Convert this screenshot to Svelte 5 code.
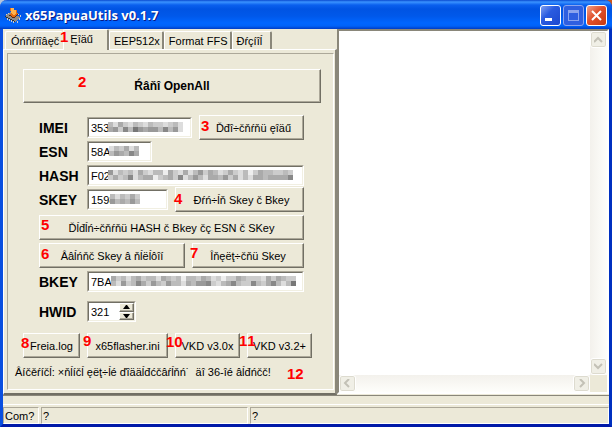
<script>
	let tabs = ['Óńňŕíîâęč', 'Ęîäű', 'EEP512x', 'Format FFS', 'Đŕçíîĺ']
	let active = 'Ęîäű'

	let imei = '353'
	let esn = '58A'
	let hash = 'F02'
	let skey = '1598'
	let bkey = '7BA'
	let hwid = 321
	let log = ''

	// two rows of grey cells per hidden value, 0 = dark, f = white
	const masks = {
		imei: ['bdacdbcdbccdcbd', 'a9c8b79a99b8b9d'],
		esn: ['dbcadb', 'b9ab8a'],
		hash: ['9dbcbdacdbbeacdadb9cabdcacdbecabbccbc', 'cacb8dbaaecbac8db9bdaab9cadbdaabaaaa8'],
		skey: ['bdbcac', '9bab9b'],
		bkey: ['acbdbacbbdabcbebbcabdceccabcccdacabcc', 'bd9cb8ac9bc9bbdab998cdba8bcc8bca8bdb7']
	}

	const notes = [
		{ n: 1, x: 60, y: 28 }, { n: 2, x: 78, y: 73 }, { n: 3, x: 201, y: 117 },
		{ n: 4, x: 174, y: 190 }, { n: 5, x: 41, y: 216 }, { n: 6, x: 41, y: 245 },
		{ n: 7, x: 190, y: 244 }, { n: 8, x: 21, y: 334 }, { n: 9, x: 83, y: 332 },
		{ n: 10, x: 166, y: 333 }, { n: 11, x: 239, y: 332 }, { n: 12, x: 287, y: 365 }
	]
</script>

{#snippet mask(name, x)}
	<svg class="mask" style="left:{x}px" width={masks[name][0].length * 5} height="10" shape-rendering="crispEdges" aria-hidden="true">
		{#each masks[name] as row, r}
			{#each row.split('') as c, i}
				<rect x={i * 5} y={r * 5} width="5" height="5" fill="#{c}{c}{c}" />
			{/each}
		{/each}
	</svg>
{/snippet}

{#snippet arrow(d)}
	<svg width="9" height="9" viewBox="0 0 9 9"><path {d} fill="none" stroke="#c3c1b6" stroke-width="2" /></svg>
{/snippet}

<main>
	<header>
		<svg width="16" height="16" viewBox="0 0 16 16" shape-rendering="crispEdges">
			<path d="M0 9l6-4 9 5-5 5z" fill="#8b8b8b" />
			<path d="M0 9l10 5v1L0 10z" fill="#333" />
			<path d="M2 11v2M4 12v2M6 13v2M8 14v2M12 14v2M14 11v2M1 8V7M3 7V6M13 8V7M15 10V8" stroke="#ccc" />
			<path d="M5 1h4v2h3v3h1l-4 5-5-4h2z" fill="#e36a10" />
			<path d="M6 1h3v2h2v3l-2 2-3-2z" fill="#ffb34d" />
			<path d="M4 8l5 3 4-4" fill="none" stroke="#5b2a10" />
		</svg>
		<h1>x65PapuaUtils v0.1.7</h1>
		<button class="win" aria-label="Minimize">
			<svg width="19" height="19"><path d="M4 12h7v3H4z" fill="#fff" /></svg>
		</button>
		<button class="win dim" aria-label="Maximize" disabled>
			<svg width="19" height="19" shape-rendering="crispEdges"><path d="M4 4h11v11H4zM5 7v7h9V7z" fill="#8ba4ee" fill-rule="evenodd" /></svg>
		</button>
		<button class="win close" aria-label="Close">
			<svg width="19" height="19"><path d="M5 5l9 9M14 5l-9 9" stroke="#fff" stroke-width="2" /></svg>
		</button>
	</header>

	<div class="body">
		<div class="left">
			<nav>
				{#each tabs as tab}
					<button class="tab" class:active={tab == active} on:click={() => (active = tab)}>{tab}</button>
				{/each}
			</nav>
			<div class="page">
				<section>
					<button class="all">Ŕâňî OpenAll</button>
					<div class="form">
						<div class="row tall">
							<label for="imei">IMEI</label>
							<span class="field f105"><input id="imei" bind:value={imei}>{@render mask('imei', 20)}</span>
							<button class="grow pad">Ďđî÷čňŕňü ęîäű</button>
						</div>
						<div class="row esn">
							<label for="esn">ESN</label>
							<span class="field f65"><input id="esn" bind:value={esn}>{@render mask('esn', 21)}</span>
						</div>
						<div class="row hash">
							<label for="hash">HASH</label>
							<span class="field grow"><input id="hash" bind:value={hash}>{@render mask('hash', 20)}</span>
						</div>
						<div class="row tall skey">
							<label for="skey">SKEY</label>
							<span class="field f81"><input id="skey" bind:value={skey}>{@render mask('skey', 22)}</span>
							<button class="grow pad">Đŕń÷ĺň Skey č Bkey</button>
						</div>
						<div class="row tall next"><button class="grow">Ďĺđĺń÷čňŕňü HASH č Bkey čç ESN č SKey</button></div>
						<div class="row tall next">
							<button class="b146">Ââĺńňč Skey â ňĺëĺôîí</button>
							<button class="grow">Îňęëţ÷čňü Skey</button>
						</div>
						<div class="row next">
							<label for="bkey">BKEY</label>
							<span class="field grow"><input id="bkey" bind:value={bkey}>{@render mask('bkey', 23)}</span>
						</div>
						<div class="row hwid">
							<label for="hwid">HWID</label>
							<span class="field f49 spin">
								<input id="hwid" bind:value={hwid}>
								<span class="steps">
									<button aria-label="Up" on:click={() => hwid++}><svg width="7" height="4"><path d="M0 4l3-4h1l3 4z" /></svg></button>
									<button aria-label="Down" on:click={() => hwid--}><svg width="7" height="4"><path d="M0 0l3 4h1l3-4z" /></svg></button>
								</span>
							</span>
						</div>
					</div>
					<div class="row tall files">
						<button class="b57">Freia.log</button>
						<button class="b81">x65flasher.ini</button>
						<button class="b65">VKD v3.0x</button>
						<button class="b65">VKD v3.2+</button>
					</div>
					<p>Âíčěŕíčĺ: ×ňĺíčĺ ęëţ÷ĺé ďîääĺđćčâŕĺňń˙ &nbsp;äî 36-îé âĺđńčč!</p>
				</section>
			</div>
		</div>

		<div class="log">
			<textarea aria-label="Log" bind:value={log}></textarea>
			<div class="bar vert">
				<button aria-label="Scroll up">{@render arrow('M0 7l4-4 4 4')}</button>
				<button aria-label="Scroll down">{@render arrow('M0 2l4 4 4-4')}</button>
			</div>
			<div class="bar horz">
				<button aria-label="Scroll left">{@render arrow('M6 0L2 4l4 4')}</button>
				<button aria-label="Scroll right">{@render arrow('M3 0l4 4-4 4')}</button>
			</div>
		</div>
	</div>

	<div class="strip"></div>
	<footer>
		<span class="com">Com?</span>
		<span class="mid">?</span>
		<span class="grow">?</span>
	</footer>

	{#each notes as note}
		<b class="note" style="left:{note.x}px;top:{note.y}px">{note.n}</b>
	{/each}
</main>

<style>
	:global(body){
		margin: 0;
		background: linear-gradient(90deg, #b4c4dc 50%, #c8541c 50%);
	}
	main{
		position: relative;
		display: flex;
		flex-direction: column;
		box-sizing: border-box;
		min-height: 100vh;
		border: 3px solid #0a4fe0;
		border-top: 0;
		border-bottom-color: #0019a8;
		border-right-color: #0030c0;
		border-radius: 7px 7px 0 0;
		background: #ece9d8;
		font: 11px/14px "Liberation Sans", Arial, sans-serif;
		color: #000;
	}
	button, input, textarea{
		box-sizing: border-box;
		margin: 0;
		padding: 0;
		font: inherit;
		color: inherit;
		border-radius: 0;
	}
	header{
		display: flex;
		align-items: center;
		gap: 2px;
		height: 29px;
		margin: 0 -3px;
		padding: 1px 5px 0;
		box-sizing: border-box;
		border-radius: 7px 7px 0 0;
		background: linear-gradient(#0a4ad0 0, #3a93ff 2px, #0a60ee 5px, #0054e3 9px, #0058ea 16px, #0066ff 23px, #0062f8 26px, #003cc4 29px);
	}
	h1{
		flex: 1;
		margin: 0 0 0 2px;
		font: bold 13px/18px "Open Sans", "Noto Sans", sans-serif;
		color: #fff;
		text-shadow: 1px 1px #0a1883;
	}
	.win{
		width: 21px;
		height: 21px;
		border: 1px solid #fff;
		border-radius: 3px;
		background: linear-gradient(135deg, #7f9ff0, #2a5be0 40%, #1c48cf);
	}
	.win svg{
		display: block;
	}
	.dim{
		border-color: #8ba4ee;
		background: #2f5fe0;
	}
	.close{
		background: linear-gradient(135deg, #f0a088, #e0502c 45%, #c83a10);
	}
	.body{
		display: flex;
		flex: 1;
	}
	.left{
		display: flex;
		flex-direction: column;
		width: 334px;
	}
	nav{
		display: flex;
		align-items: flex-end;
		height: 20px;
		padding-left: 2px;
	}
	.tab{
		height: 18px;
		padding: 0 2px 0 4px;
		border: 1px solid #fff;
		border-right: 2px solid #8a877a;
		border-bottom: 0;
		border-radius: 2px 2px 0 0;
		background: #ece9d8;
	}
	.tab:first-child{
		padding: 0 4px 0 5px;
		border-right: 0;
	}
	.tab:last-child{
		padding-right: 8px;
	}
	.active{
		height: 21px;
		margin-bottom: -1px;
		padding: 0 14px 3px 6px;
		z-index: 1;
	}
	.page{
		flex: 1;
		display: flex;
		padding: 3px 2px 3px 3px;
		border: 1px solid #fff;
		border-right: 2px solid #8a877a;
		border-bottom: 2px solid #716f64;
	}
	section{
		flex: 1;
		padding: 15px 12px 0 15px;
		border: 1px solid;
		border-color: #aca899 #fff #fff #aca899;
	}
	section button{
		border: 1px solid;
		border-color: #fff #716f64 #716f64 #fff;
		box-shadow: inset -1px -1px #aca899;
		background: #ece9d8;
	}
	.all{
		display: block;
		width: 298px;
		height: 34px;
		font-size: 12px;
		font-weight: bold;
	}
	.form{
		width: 265px;
		margin: 12px 0 0 16px;
	}
	.row{
		display: flex;
		align-items: center;
		height: 21px;
	}
	.row > button{
		height: 25px;
	}
	.row > * + button{
		margin-left: 7px;
	}
	.tall{
		height: 25px;
	}
	.esn, .skey{
		margin-top: 1px;
	}
	.hash, .next{
		margin-top: 3px;
	}
	.hwid{
		margin-top: 9px;
	}
	.files{
		margin-top: 11px;
	}
	label{
		width: 48px;
		font-size: 14px;
		font-weight: bold;
	}
	.field{
		position: relative;
		display: flex;
		box-sizing: border-box;
		height: 21px;
		border: 1px solid;
		border-color: #aca899 #fff #fff #aca899;
		background: #fff;
	}
	.field input{
		width: 100%;
		padding: 0 2px;
		border: 1px solid;
		border-color: #716f64 #f1efe2 #f1efe2 #716f64;
		background: #fff;
	}
	.mask{
		position: absolute;
		top: 4px;
	}
	.grow{
		flex: 1;
	}
	.row .pad{
		padding-left: 4px;
	}
	.f105{ width: 105px; }
	.f81, .b81{ width: 81px; }
	.f65, .b65{ width: 65px; }
	.f49{ width: 49px; }
	.b57{ width: 57px; }
	.b146{ width: 146px; }
	.steps{
		position: absolute;
		top: 1px;
		right: 1px;
		display: grid;
		width: 15px;
		height: 17px;
	}
	.steps button{
		display: grid;
		place-items: center;
	}
	p{
		margin: 7px 0 0 -8px;
		white-space: nowrap;
	}
	.log{
		flex: 1;
		display: grid;
		grid-template: 1fr 17px / 1fr 17px;
		border: 2px solid;
		border-color: #8a877a #fff #fff #8a877a;
		margin-bottom: 1px;
	}
	textarea{
		width: 100%;
		height: 100%;
		border: 0;
		padding: 2px;
		resize: none;
		background: #fff;
	}
	.bar{
		display: flex;
		justify-content: space-between;
		background: linear-gradient(90deg, #f3f1ec, #fefefb);
	}
	.vert{
		flex-direction: column;
	}
	.horz{
		background: linear-gradient(#f3f1ec, #fefefb);
	}
	.bar button{
		display: grid;
		place-items: center;
		width: 17px;
		height: 17px;
		border: 1px solid #fff;
		border-radius: 3px;
		background: #f0efe6;
		box-shadow: inset 0 0 0 1px #dddbcf;
	}
	.strip{
		height: 8px;
		border-top: 1px solid #8a877a;
		border-bottom: 1px solid #fff;
	}
	footer{
		display: flex;
		gap: 2px;
		padding-top: 2px;
	}
	footer span{
		height: 15px;
		padding-left: 1px;
		border: 1px solid;
		border-color: #aca899 #fff #fff #aca899;
		line-height: 16px;
	}
	.com{ width: 33px; }
	.mid{ width: 204px; }
	.note{
		position: absolute;
		margin-left: -3px;
		font-size: 15px;
		line-height: 17px;
		font-kerning: none;
		color: #f00;
		z-index: 2;
	}
</style>
